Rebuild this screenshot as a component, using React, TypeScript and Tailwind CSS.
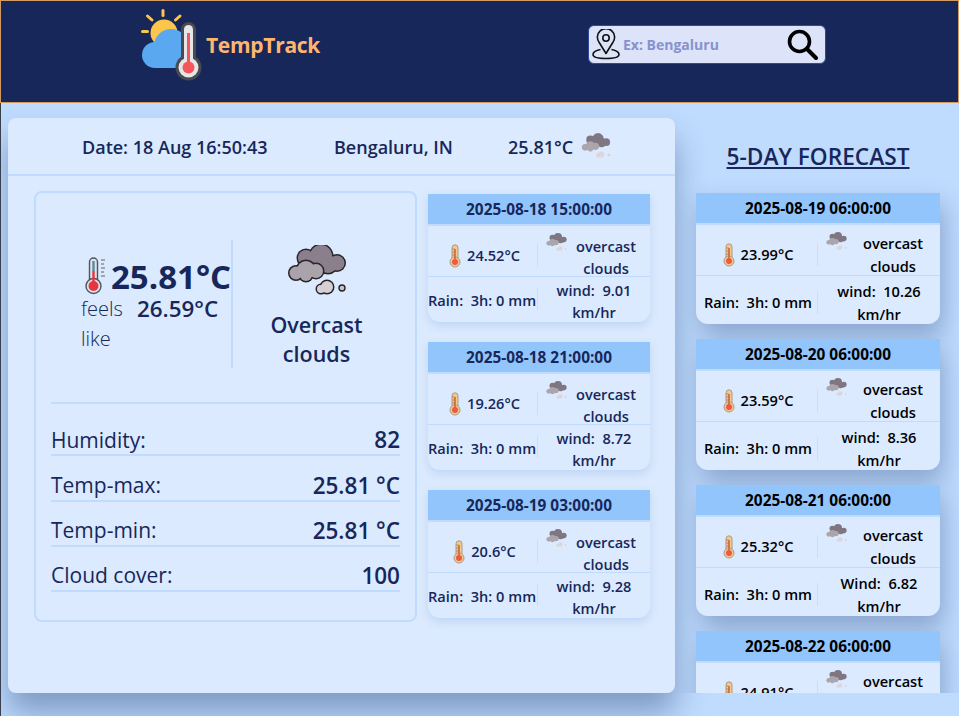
import React from 'react';

const font = { fontFamily: '"Open Sans", "Noto Sans", sans-serif' };

function Logo() {
    return (
        <svg width="61" height="72" viewBox="0 0 61 72" fill="none">
            <g stroke="#fcc64c" strokeWidth="3" strokeLinecap="round">
                <path d="M22 1.5v5" />
                <path d="M6.5 7l4.5 4" />
                <path d="M39 7l-4.5 4" />
                <path d="M1.5 22.5h5" />
            </g>
            <circle cx="23" cy="24" r="13.5" fill="#fcc64c" />
            <circle cx="14" cy="46" r="13" fill="#5aa9f0" />
            <circle cx="30" cy="37" r="17" fill="#5aa9f0" />
            <rect x="14" y="37" width="30" height="22" fill="#5aa9f0" />
            <rect x="40" y="13" width="15" height="45" rx="7.5" fill="#474a50" />
            <circle cx="47.5" cy="58.5" r="13" fill="#474a50" />
            <rect x="43" y="16" width="9" height="42" rx="4.5" fill="#e6e6e8" />
            <circle cx="47.5" cy="58.5" r="10" fill="#e6e6e8" />
            <rect x="46" y="24" width="3" height="32" fill="#f5565c" />
            <circle cx="47.5" cy="58.5" r="6" fill="#f5565c" />
        </svg>
    );
}

function PinIcon() {
    return (
        <svg width="28" height="31" viewBox="0 0 28 31" fill="none" stroke="#111" strokeWidth="1.6">
            <path d="M14 24.5 L7.2 13.5 A8.6 8.6 0 1 1 20.8 13.5 Z" strokeLinejoin="round" />
            <circle cx="14" cy="9" r="3.2" />
            <path d="M8.5 20.5 C3.5 21.5 1 23.5 1 25.5 C1 28 6.5 29.5 14 29.5 C21.5 29.5 27 28 27 25.5 C27 23.5 24.5 21.5 19.5 20.5" />
        </svg>
    );
}

function SearchIcon() {
    return (
        <svg width="31" height="31" viewBox="0 0 31 31" fill="none" stroke="#000" strokeLinecap="round">
            <circle cx="12.5" cy="12.5" r="10" strokeWidth="3.6" />
            <path d="M20 20l9 9" strokeWidth="4" />
        </svg>
    );
}

function BigThermometer() {
    return (
        <svg width="22" height="38" viewBox="0 0 22 38" fill="none">
            <rect x="4.5" y="1" width="8" height="28" rx="4" fill="#dfe4ea" stroke="#50555c" strokeWidth="1.4" />
            <circle cx="8.5" cy="29" r="7.5" fill="#dfe4ea" stroke="#50555c" strokeWidth="1.4" />
            <rect x="7.3" y="4" width="2.4" height="10" fill="#5d8a9c" />
            <rect x="7.3" y="14" width="2.4" height="15" fill="#e8343f" />
            <circle cx="8.5" cy="29" r="5" fill="#e8343f" />
            <path d="M16 3h4M16 7h3M16 11h4M16 15h3M16 19h4" stroke="#8a8f96" strokeWidth="1.4" />
        </svg>
    );
}

function SmallThermometer() {
    return (
        <svg width="12" height="24" viewBox="0 0 12 24" fill="none">
            <rect x="3" y="0.8" width="6" height="17" rx="3" fill="#f3c98b" stroke="#a99a86" strokeWidth="1" />
            <circle cx="6" cy="18" r="5" fill="#f3c98b" stroke="#a99a86" strokeWidth="1" />
            <rect x="5.2" y="5" width="1.6" height="12" fill="#d9603f" />
            <circle cx="6" cy="18" r="3" fill="#ec5a45" />
            <path d="M3.5 5h2M3.5 8h2M3.5 11h2" stroke="#8b6a3e" strokeWidth="0.7" />
        </svg>
    );
}

const backCloud = [
    [35, 11, 11],
    [20, 13, 8],
    [51, 18, 7.5],
    [42, 19, 9],
    [28, 17, 8],
];
const frontCloud = [
    [20, 25, 9],
    [10, 28, 6.5],
    [30, 26, 7],
    [20, 30, 6],
];
const puff = [
    [35, 44, 4],
    [41, 42, 6],
];

function Circles({ list, fill, grow = 0 }: { list: number[][]; fill: string; grow?: number }) {
    return (
        <>
            {list.map((c, i) => (
                <circle key={i} cx={c[0]} cy={c[1]} r={c[2] + grow} fill={fill} />
            ))}
        </>
    );
}

function BigCloud() {
    return (
        <svg width="62" height="50" viewBox="0 0 62 50">
            <Circles list={backCloud} fill="#2a2528" grow={1.5} />
            <Circles list={backCloud} fill="#8b7f8d" />
            <Circles list={frontCloud} fill="#2a2528" grow={1.5} />
            <Circles list={frontCloud} fill="#aaa3ab" />
            <Circles list={puff} fill="#2a2528" grow={1.5} />
            <Circles list={puff} fill="#d6d0d4" />
            <circle cx="56" cy="43" r="3" fill="#c9c4c8" stroke="#2a2528" strokeWidth="1.4" />
        </svg>
    );
}

function SoftCloud({ width }: { width: number }) {
    return (
        <svg width={width} height={width * 0.8} viewBox="0 0 62 50">
            <Circles list={backCloud} fill="#7f7682" />
            <Circles list={frontCloud} fill="#aba5ac" />
            <Circles list={puff} fill="#dcd6da" />
            <circle cx="56" cy="43" r="2.5" fill="#d5d0d4" />
        </svg>
    );
}

type Forecast = { time: string; temp: string; wind: string };

function ForecastCard({ item, wide }: { item: Forecast; wide?: boolean }) {
    return (
        <div
            className={
                wide
                    ? 'w-[244px] shrink-0 rounded-b-xl bg-[#dbeafe] text-black font-semibold text-[14.6px] shadow-[4px_12px_24px_rgba(40,70,120,0.35)]'
                    : 'w-[222px] shrink-0 rounded-b-xl bg-[#dbeafe] text-[#17275a] font-semibold text-[14.6px] border-b border-[#bfdbfe] shadow-[0_3px_10px_rgba(60,100,170,0.15)]'
            }
        >
            <div className="h-[32px] pt-[2px] bg-[#93c5fd] border-b-2 border-[#bfdbfe] flex items-center justify-center text-[15.4px] font-bold">
                {item.time}
            </div>
            <div className="flex h-[51px] border-b border-[#bfdbfe]">
                <div className={wide ? 'w-[121px] flex items-center justify-center gap-[6px] pl-[3px] pt-[9px]' : 'w-[109px] flex items-center justify-center gap-[6px] pl-[4px] pt-[9px]'}>
                    <SmallThermometer />
                    <span>{item.temp}</span>
                </div>
                <div className="w-px h-[23px] mt-[18px] bg-[#c9def9]" />
                <div className="flex flex-1 items-start pt-[7px]">
                    <div className={wide ? 'pl-[7px] w-[42px] shrink-0' : 'pl-[7px] w-[36px] shrink-0'}>
                        <SoftCloud width={23} />
                    </div>
                    <div className={wide ? 'text-center leading-[23px] flex-1 pr-[14px]' : 'text-center leading-[22px] flex-1 pr-[12px] pt-[2px]'}>
                        overcast clouds
                    </div>
                </div>
            </div>
            <div className={wide ? 'flex h-[48px]' : 'flex h-[45px]'}>
                <div className={wide ? 'w-[121px] flex items-center justify-end pr-[5px] pt-[6px] whitespace-pre' : 'w-[109px] flex items-center pt-[2px] whitespace-pre'}>
                    Rain:  3h: 0 mm
                </div>
                <div className={wide ? 'w-px h-[23px] mt-[15px] bg-[#c9def9]' : 'w-px h-[22px] mt-[11px] bg-[#c9def9]'} />
                <div className="flex-1 flex items-center">
                    <div className={wide ? 'text-center leading-[23px] w-full pt-[6px] px-[6px] whitespace-pre-wrap' : 'text-center leading-[22px] w-full pt-[3px] px-[6px] whitespace-pre-wrap'}>
                        {item.wind}
                    </div>
                </div>
            </div>
        </div>
    );
}

const today: Forecast[] = [
    { time: '2025-08-18 15:00:00', temp: '24.52°C', wind: 'wind:  9.01 km/hr' },
    { time: '2025-08-18 21:00:00', temp: '19.26°C', wind: 'wind:  8.72 km/hr' },
    { time: '2025-08-19 03:00:00', temp: '20.6°C', wind: 'wind:  9.28 km/hr' },
];

const fiveDay: Forecast[] = [
    { time: '2025-08-19 06:00:00', temp: '23.99°C', wind: 'wind:  10.26 km/hr' },
    { time: '2025-08-20 06:00:00', temp: '23.59°C', wind: 'wind:  8.36 km/hr' },
    { time: '2025-08-21 06:00:00', temp: '25.32°C', wind: 'Wind:  6.82 km/hr' },
    { time: '2025-08-22 06:00:00', temp: '24.91°C', wind: 'wind:  7.45 km/hr' },
];

const stats = [
    ['Humidity:', '82'],
    ['Temp-max:', '25.81 °C'],
    ['Temp-min:', '25.81 °C'],
    ['Cloud cover:', '100'],
];

export default function App() {
    return (
        <div className="w-[959px] h-[716px] overflow-hidden bg-[#bfdbfe] text-[#17275a]" style={font}>
            <header className="h-[103px] bg-[#17275a] border border-[#d39a62] flex">
                <div className="flex items-center w-[587px] pl-[140px] pb-[20px] pt-[6px]">
                    <Logo />
                    <span className="ml-[4px] mt-[2px] text-[21px] font-bold text-[#ffb570] tracking-[-0.3px]">TempTrack</span>
                </div>
                <div className="mt-[24px] h-[39px] w-[238px] rounded-md bg-[#dde3f8] border border-[#2f4a9a] flex items-center pl-[3px] pr-[7px]">
                    <PinIcon />
                    <input
                        placeholder="Ex: Bengaluru"
                        className="ml-[3px] flex-1 min-w-0 bg-transparent text-[14px] font-bold outline-none placeholder:text-[#8592cf]"
                    />
                    <SearchIcon />
                </div>
            </header>

            <div className="flex border-l border-[#3a3f4a] h-[613px]">
                <main className="ml-[7px] mt-[15px] w-[667px] h-[575px] shrink-0 rounded-lg bg-[#dbeafe] shadow-[0_20px_30px_rgba(40,70,120,0.42)]">
                    <div className="h-[58px] border-b-2 border-[#bfdbfe] flex items-center text-[18px] font-semibold pl-[74px] pt-[2px]">
                        <span className="w-[252px] shrink-0">Date: 18 Aug 16:50:43</span>
                        <span className="w-[174px] shrink-0">Bengaluru, IN</span>
                        <span>25.81°C</span>
                        <span className="ml-[7px] -mt-[2px]">
                            <SoftCloud width={32} />
                        </span>
                    </div>
                    <div className="flex pl-[26px] pt-[15px]">
                        <section className="w-[383px] h-[431px] shrink-0 rounded-lg border-2 border-[#bfdbfe] px-[15px]">
                            <div className="h-[211px] border-b-2 border-[#bfdbfe] flex pt-[47px]">
                                <div className="w-[182px] h-[128px] border-r-2 border-[#bfdbfe] pl-[30px] shrink-0">
                                    <div className="flex items-center h-[54px] pt-[18px]">
                                        <span className="ml-[4px]">
                                            <BigThermometer />
                                        </span>
                                        <span className="text-[33px] leading-none font-bold whitespace-nowrap ml-[4px]">25.81°C</span>
                                    </div>
                                    <div className="flex">
                                        <div className="w-[56px] text-[20px] font-light leading-[30px]">feels like</div>
                                        <div className="text-[22.4px] font-semibold leading-[30px]">26.59°C</div>
                                    </div>
                                </div>
                                <div className="flex-1 flex flex-col items-center pt-[5px]">
                                    <BigCloud />
                                    <div className="mt-[15px] text-center text-[21.5px] font-semibold leading-[29px] w-[110px]">Overcast clouds</div>
                                </div>
                            </div>
                            <div className="pt-[7px]">
                                {stats.map(([label, value]) => (
                                    <div key={label} className="h-[45.3px] flex items-end justify-between">
                                        <div className="w-full h-[30px] flex items-center justify-between border-b-2 border-[#bfdbfe]">
                                            <span className="text-[21px]">{label}</span>
                                            <span className="text-[22.5px] font-semibold">{value}</span>
                                        </div>
                                    </div>
                                ))}
                            </div>
                        </section>
                        <div className="ml-[11px] pt-[3px] flex flex-col gap-[19px]">
                            {today.map(item => (
                                <ForecastCard key={item.time} item={item} />
                            ))}
                        </div>
                    </div>
                </main>
                <aside className="mt-[15px] w-[284px] h-[575px] overflow-hidden pl-[21px] flex flex-col">
                    <h2 className="h-[75px] shrink-0 pt-[22px] text-center w-[244px] text-[22.7px] font-semibold underline whitespace-nowrap">
                        5-DAY FORECAST
                    </h2>
                    <div className="flex flex-col gap-[15px]">
                        {fiveDay.map(item => (
                            <ForecastCard key={item.time} item={item} wide />
                        ))}
                    </div>
                </aside>
            </div>
        </div>
    );
}
